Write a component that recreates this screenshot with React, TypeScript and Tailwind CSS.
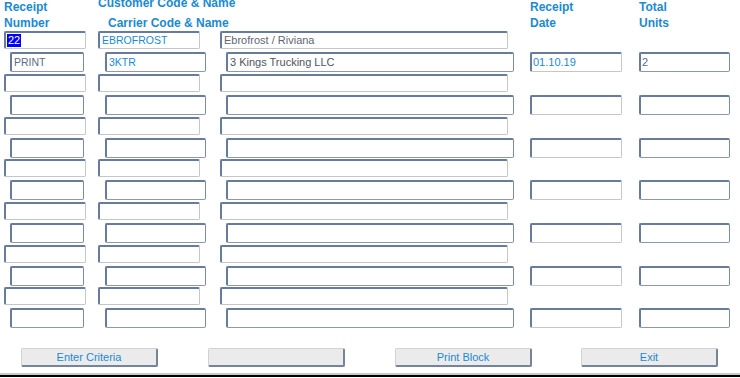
const font = "font-['Liberation_Sans',Arial,sans-serif]";

type BoxProps = {
  w: string;
  ml: string;
  h?: string;
  tone?: "light" | "dark";
  children?: React.ReactNode;
};

function Box({ w, ml, h = "h-[18px]", tone = "light", children }: BoxProps) {
  const edge =
    tone === "light"
      ? "border-r-[#c6c6c6] border-b-[#c6c6c6]"
      : "border-r-[#7c8aa4] border-b-[#8d98ad]";
  return (
    <div
      className={`${w} ${ml} ${h} shrink-0 rounded-[2px] border-t-2 border-l-2 border-r border-b border-t-[#687b9c] border-l-[#687b9c] ${edge} bg-white flex items-center pl-[1px] overflow-hidden text-[11px] leading-none whitespace-nowrap`}
    >
      {children}
    </div>
  );
}

function Header() {
  const head = "text-[12px] font-bold leading-[16px] text-[#1b8ad2]";
  return (
    <div className={`flex h-[31px] ${head}`}>
      <div className="ml-[4px] w-[94px] -mt-[1px]">
        <div>Receipt</div>
        <div>Number</div>
      </div>
      <div className="w-[432px]">
        <div className="-mt-[5px] whitespace-nowrap">Customer Code &amp; Name</div>
        <div className="mt-[4px] ml-[10px] whitespace-nowrap">Carrier Code &amp; Name</div>
      </div>
      <div className="w-[109px] -mt-[1px]">
        <div>Receipt</div>
        <div>Date</div>
      </div>
      <div className="-mt-[1px]">
        <div>Total</div>
        <div>Units</div>
      </div>
    </div>
  );
}

type Pair = {
  receipt?: React.ReactNode;
  customer?: string;
  customerName?: string;
  carrierRef?: string;
  carrier?: string;
  carrierName?: string;
  date?: string;
  units?: string;
};

const pairs: Pair[] = [
  {
    receipt: (
      <span className="bg-[#0000ff] text-white px-[1px] py-[1px] text-[11px]">22</span>
    ),
    customer: "EBROFROST",
    customerName: "Ebrofrost / Riviana",
    carrierRef: "PRINT",
    carrier: "3KTR",
    carrierName: "3 Kings Trucking LLC",
    date: "01.10.19",
    units: "2",
  },
  {},
  {},
  {},
  {},
  {},
  {},
];

function PairRows({ p, tight }: { p: Pair; tight: boolean }) {
  return (
    <div className="flex flex-col">
      <div className="flex">
        <Box w="w-[82px]" ml="ml-[4px]">{p.receipt}</Box>
        <Box w="w-[102px]" ml="ml-[12px]">
          <span className="text-[#1b8ad2] text-[10.5px] pl-[1px]">{p.customer}</span>
        </Box>
        <Box w="w-[288px]" ml="ml-[20px]">
          <span className="text-[#5f6673] pl-[1px]">{p.customerName}</span>
        </Box>
      </div>
      <div className={`flex mt-[3px] ${tight ? "mb-[1px]" : "mb-[2px]"}`}>
        <Box w="w-[74px]" ml="ml-[10px]" h="h-[20px]" tone="dark">
          <span className="text-[#5b6b86] text-[10.5px] pl-[1px]">{p.carrierRef}</span>
        </Box>
        <Box w="w-[101px]" ml="ml-[21px]" h="h-[20px]" tone="dark">
          <span className="text-[#1b8ad2] text-[10.5px] pl-[1px]">{p.carrier}</span>
        </Box>
        <Box w="w-[288px]" ml="ml-[20px]" h="h-[20px]" tone="dark">
          <span className="text-[#4f5561] pl-[1px]">{p.carrierName}</span>
        </Box>
        <Box w="w-[92px]" ml="ml-[16px]" h="h-[20px]">
          <span className="text-[#1b8ad2]">{p.date}</span>
        </Box>
        <Box w="w-[91px]" ml="ml-[17px]" h="h-[20px]" tone="dark">
          <span className="text-[#5b6b86]">{p.units}</span>
        </Box>
      </div>
    </div>
  );
}

function Btn({ label, ml }: { label: string; ml: string }) {
  return (
    <button
      className={`${ml} w-[137px] h-[19px] bg-[#ebebeb] border-t border-l border-t-[#d2d2d2] border-l-[#d2d2d2] border-r-2 border-b-2 border-r-[#76849b] border-b-[#76849b] rounded-[2px] text-[11px] leading-none text-[#1b8ad2]`}
    >
      {label}
    </button>
  );
}

export default function App() {
  return (
    <div className={`w-[740px] h-[378px] bg-white overflow-hidden flex flex-col ${font}`}>
      <Header />
      <div className="flex flex-col">
        {pairs.map((p, i) => (
          <PairRows key={i} p={p} tight={i % 3 === 2 || i === pairs.length - 1} />
        ))}
      </div>
      <div className="flex mt-[19px]">
        <Btn label="Enter Criteria" ml="ml-[21px]" />
        <Btn label="" ml="ml-[50px]" />
        <Btn label="Print Block" ml="ml-[50px]" />
        <Btn label="Exit" ml="ml-[49px]" />
      </div>
      <div className="mt-[6px] h-[2px] bg-[#c9c9c9]" />
      <div className="h-[2px] bg-black" />
    </div>
  );
}
